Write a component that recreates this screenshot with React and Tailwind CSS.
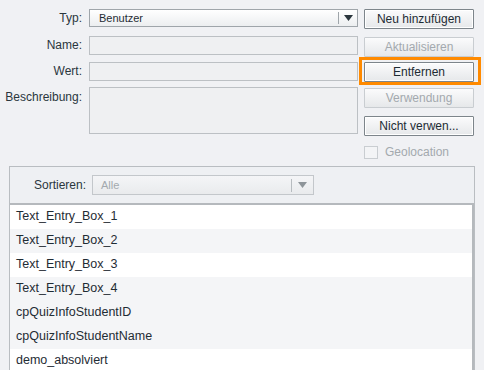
import React from "react";

const font = { fontFamily: '"Liberation Sans", Arial, sans-serif' };

function Btn({ children, disabled }) {
  return (
    <div
      className={
        "w-[110px] h-[20px] flex items-center justify-center text-[12px] border rounded-[1px] bg-gradient-to-b from-[#fbfbfc] to-[#e6e8ea] " +
        (disabled
          ? "border-[#c9cdd1] text-[#a3a9ae]"
          : "border-[#7d858b] text-[#1d2b33] shadow-[inset_0_0_0_1px_#ffffff]")
      }
    >
      {children}
    </div>
  );
}

function Arrow({ dim }) {
  return (
    <svg width="9" height="6" viewBox="0 0 9 6">
      <path d="M0 0 L9 0 L4.5 6 Z" fill={dim ? "#8d9499" : "#2b363d"} />
    </svg>
  );
}

const rows = [
  ["Text_Entry_Box_1", false],
  ["Text_Entry_Box_2", true],
  ["Text_Entry_Box_3", false],
  ["Text_Entry_Box_4", true],
  ["cpQuizInfoStudentID", true],
  ["cpQuizInfoStudentName", true],
  ["demo_absolviert", false],
];

export default function App() {
  return (
    <div
      className="w-[484px] h-[370px] overflow-hidden bg-[#f0f1f4] text-[#1f2c34] relative"
      style={font}
    >
      <div className="pt-[9px] flex flex-col">
        {/* Row 1 */}
        <div className="flex items-start h-[20px]">
          <div className="w-[82px] text-right text-[12px] leading-[18px] text-[#2a363d]">Typ:</div>
          <div className="ml-[7px] w-[269px] h-[18px] border border-[#9fa5aa] bg-gradient-to-b from-[#ffffff] to-[#eceef0] flex items-center">
            <span className="flex-1 pl-[9px] text-[11px] text-[#1f2c34]">Benutzer</span>
            <div className="w-px h-[12px] bg-[#9fa5aa]" />
            <div className="w-[18px] flex justify-center">
              <Arrow />
            </div>
          </div>
          <div className="ml-[6px]">
            <Btn>Neu hinzufügen</Btn>
          </div>
        </div>
        {/* Row 2 */}
        <div className="flex items-start mt-[7px] h-[20px]">
          <div className="w-[82px] text-right text-[12px] leading-[18px] text-[#2a363d]">Name:</div>
          <div className="ml-[7px] w-[269px] h-[19px] border border-[#bcc0c4] bg-[#eff0f2]" />
          <div className="ml-[6px] mt-[1px]">
            <Btn disabled>Aktualisieren</Btn>
          </div>
        </div>
        {/* Row 3 */}
        <div className="flex items-start mt-[6px] h-[19px]">
          <div className="w-[82px] text-right text-[12px] leading-[18px] text-[#2a363d]">Wert:</div>
          <div className="ml-[7px] w-[269px] h-[19px] border border-[#bcc0c4] bg-[#eff0f2]" />
          <div className="ml-[6px]">
            <Btn>Entfernen</Btn>
          </div>
        </div>
        {/* Row 4 */}
        <div className="flex items-start mt-[6px]">
          <div className="w-[82px] text-right text-[12px] leading-[18px] pt-[1px] text-[#2a363d]">Beschreibung:</div>
          <div className="ml-[7px] w-[269px] h-[47px] border border-[#bcc0c4] bg-[#eff0f2]" />
          <div className="ml-[6px] mt-[1px] flex flex-col gap-[10px]">
            <Btn disabled>Verwendung</Btn>
            <div className="-mt-[2px]">
              <Btn>Nicht verwen...</Btn>
            </div>
          </div>
        </div>
        {/* Geolocation */}
        <div className="flex items-center mt-[9px] ml-[364px] h-[14px]">
          <div className="w-[14px] h-[13px] border border-[#c9cdd1] bg-[#f3f4f6]" />
          <span className="ml-[7px] text-[12px] text-[#a3a9ae]">Geolocation</span>
        </div>
        {/* Panel */}
        <div className="mt-[7px] ml-[9px] w-[466px] h-[220px] border border-[#b9bdc1] bg-[#eef0f3] flex flex-col">
          <div className="h-[36px] flex items-center">
            <div className="w-[76px] text-right text-[12px] text-[#2a363d]">Sortieren:</div>
            <div className="ml-[6px] w-[222px] h-[20px] border border-[#c3c7cb] bg-gradient-to-b from-[#f4f5f7] to-[#e9ebed] flex items-center">
              <span className="flex-1 pl-[8px] text-[11px] text-[#a3a9ae]">Alle</span>
              <div className="w-px h-[13px] bg-[#b7bcc0]" />
              <div className="w-[21px] flex justify-center">
                <Arrow dim />
              </div>
            </div>
          </div>
          <div className="border-t-2 border-[#b5b9bd] border-r-2 border-r-[#b5b9bd] flex-1 bg-white">
            {rows.map(([t, g]) => (
              <div
                key={t}
                className={
                  "h-[24px] flex items-center pl-[6px] pb-[1px] text-[12.5px] text-[#1f2c34] " +
                  (g ? "bg-[#f4f5f7]" : "bg-white")
                }
              >
                {t}
              </div>
            ))}
          </div>
        </div>
      </div>
      {/* highlight */}
      <div className="absolute left-[359px] top-[57px] w-[122px] h-[28px] border-[3px] border-[#ff8a00] pointer-events-none" />
    </div>
  );
}
